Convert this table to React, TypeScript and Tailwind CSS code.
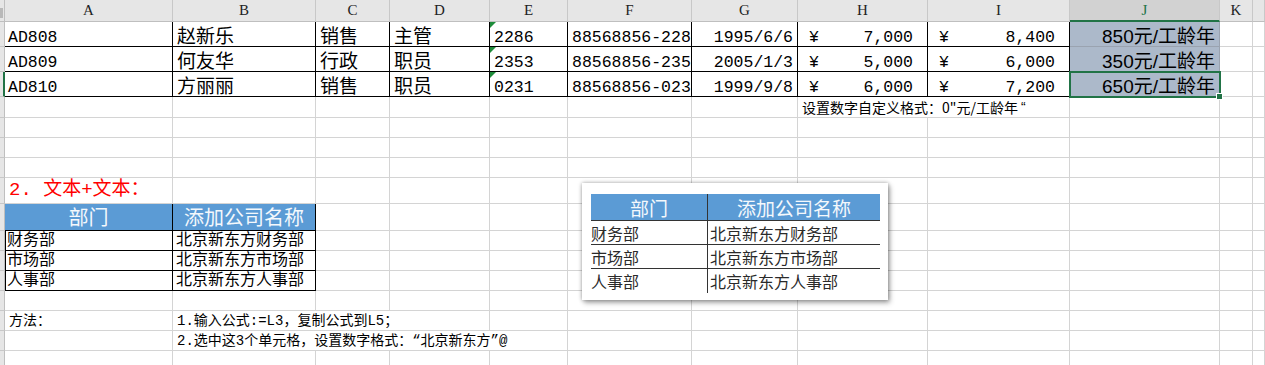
import React from "react";

// Sheet fonts: Song-style latin (monospaced serif) with a CJK fallback, and a sans stack for the J column
const SONG = "font-['Liberation_Mono','Noto_Sans_CJK_SC',monospace]";
const HEI = "font-['Liberation_Sans','Noto_Sans_CJK_SC',sans-serif]";
const CJK = "font-['Noto_Sans_CJK_SC','Liberation_Sans',sans-serif]";
const LATIN = `${SONG} text-[16.5px]`;

const SPAN: Record<number, string> = {
  1: "",
  2: "col-span-2",
  3: "col-span-3",
  4: "col-span-4",
};

type Line = "grid" | "black" | "sel" | "blue";

const LINES: Record<Line, string> = {
  grid: "border-r border-b border-[#d4d4d4]",
  black: "border-r border-b border-black",
  sel: "border-r border-b border-[#9aa3b0] bg-[#acb9ca]",
  blue: "border-r border-b border-black bg-[#5b9bd5]",
};

function Cell({
  line = "grid",
  span = 1,
  bottom = false,
  className = "",
  children,
}: {
  line?: Line;
  span?: number;
  bottom?: boolean;
  className?: string;
  children?: React.ReactNode;
}) {
  return (
    <div
      className={`relative flex whitespace-nowrap leading-none text-black ${
        bottom ? "items-end" : "items-center"
      } ${LINES[line]} ${SPAN[span]} ${className}`}
    >
      {children}
    </div>
  );
}

function RowHead({ active = false }: { active?: boolean }) {
  return (
    <div
      className={`bg-[#e6e6e6] border-b border-b-[#c8c8c8] ${
        active ? "border-r-2 border-r-[#217346]" : "border-r border-r-[#bfbfbf]"
      }`}
    />
  );
}

function ColHead({ label, active = false }: { label: string; active?: boolean }) {
  return (
    <div
      className={`flex items-center justify-center font-['Liberation_Serif',serif] text-[15px] leading-none border-r border-r-[#c8c8c8] ${
        active
          ? "bg-[#d2d2d2] text-[#217346] border-b-2 border-b-[#217346]"
          : "bg-[#e6e6e6] text-[#222] border-b border-b-[#bfbfbf]"
      }`}
    >
      {label}
    </div>
  );
}

// "number stored as text" marker in the top-left corner of a cell
function TextFlag() {
  return (
    <span className="absolute left-0 top-0 h-0 w-0 border-t-[6px] border-r-[6px] border-t-[#1e8c3a] border-r-transparent" />
  );
}

function Blank({ n }: { n: number }) {
  return (
    <>
      {Array.from({ length: n }).map((_, i) => (
        <Cell key={i} />
      ))}
    </>
  );
}

const staff = [
  ["AD808", "赵新乐", "销售", "主管", "2286", "88568856-228", "1995/6/6", "7,000", "8,400", "850"],
  ["AD809", "何友华", "行政", "职员", "2353", "88568856-235", "2005/1/3", "5,000", "6,000", "350"],
  ["AD810", "方丽丽", "销售", "职员", "0231", "88568856-023", "1999/9/8", "6,000", "7,200", "650"],
];

const depts = [
  ["财务部", "北京新东方财务部"],
  ["市场部", "北京新东方市场部"],
  ["人事部", "北京新东方人事部"],
];

const letters = ["A", "B", "C", "D", "E", "F", "G", "H", "I", "J", "K", ""];

function EmptyRow() {
  return (
    <>
      <RowHead />
      <Blank n={12} />
    </>
  );
}

function DeptCard() {
  return (
    <div className="absolute left-[582px] top-[183px] h-[117px] w-[306px] bg-white pl-[9px] pt-[11px] shadow-[0_0_4px_rgba(0,0,0,0.35),2px_3px_5px_rgba(0,0,0,0.3)]">
      <div className={`grid w-[289px] grid-cols-[117px_172px] grid-rows-[27px_24px_24px_24px] ${CJK} leading-none`}>
        <div className="flex items-center justify-center border-r border-b border-[#333] bg-[#5b9bd5] text-[19px] text-[#f4f8fc]">
          部门
        </div>
        <div className="flex items-center justify-center border-b border-[#333] bg-[#5b9bd5] text-[19px] text-[#f4f8fc]">
          添加公司名称
        </div>
        {depts.map(([d, full], i) => (
          <React.Fragment key={d}>
            <div
              className={`flex items-center border-r border-[#333] text-[16px] text-[#2a2a2a] ${
                i < 2 ? "border-b" : ""
              }`}
            >
              {d}
            </div>
            <div
              className={`flex items-center pl-[2px] border-[#333] text-[16px] text-[#2a2a2a] ${
                i < 2 ? "border-b" : ""
              }`}
            >
              {full}
            </div>
          </React.Fragment>
        ))}
      </div>
    </div>
  );
}

export default function App() {
  return (
    <div className="relative h-[365px] w-[1265px] overflow-hidden bg-white">
      <div className="grid grid-cols-[5px_168px_143px_74px_100px_78px_124px_106px_130px_142px_150px_33px_1fr] grid-rows-[22px_25px_25px_25px_21px_20px_20px_20px_26px_27px_20px_20px_20px_20px_20px_20px_20px]">
        {/* column header row */}
        <div className="relative bg-[#e6e6e6] border-r border-b border-[#bfbfbf]">
          <span className="absolute left-0 top-[8px] h-[10px] w-[3px] bg-[#b9b9b9]" />
        </div>
        {letters.map((l, i) => (
          <ColHead key={i} label={l} active={l === "J"} />
        ))}

        {/* staff rows */}
        {staff.map((p, i) => (
          <React.Fragment key={p[0]}>
            <RowHead active={i === 2} />
            <Cell line="black" bottom className={`pl-[3px] ${LATIN}`}>
              {p[0]}
            </Cell>
            <Cell line="black" className={`pl-[4px] ${CJK} text-[19px]`}>
              {p[1]}
            </Cell>
            <Cell line="black" className={`pl-[4px] ${CJK} text-[19px]`}>
              {p[2]}
            </Cell>
            <Cell line="black" className={`pl-[4px] ${CJK} text-[19px]`}>
              {p[3]}
            </Cell>
            <Cell line="black" bottom className={`pl-[4px] ${LATIN}`}>
              <TextFlag />
              {p[4]}
            </Cell>
            <Cell line="black" bottom className={`pl-[4px] ${LATIN}`}>
              {p[5]}
            </Cell>
            <Cell line="black" bottom className={`justify-end pr-[4px] ${LATIN}`}>
              {p[6]}
            </Cell>
            <Cell line="black" bottom className={`justify-between pl-[11px] pr-[14px] ${LATIN}`}>
              <span>¥</span>
              <span>{p[7]}</span>
            </Cell>
            <Cell line="black" bottom className={`justify-between pl-[11px] pr-[14px] ${LATIN}`}>
              <span>¥</span>
              <span>{p[8]}</span>
            </Cell>
            <Cell line="sel" bottom className={`justify-end pr-[4px] ${HEI} text-[19px]`}>
              {p[9]}元/工龄年
            </Cell>
            <Blank n={2} />
          </React.Fragment>
        ))}

        {/* note under the staff table */}
        <RowHead />
        <Blank n={7} />
        <Cell span={2} className={`pl-[4px] ${CJK} text-[14px]`}>
          设置数字自定义格式：0"元/工龄年
          <span className="pl-[3px] font-['Liberation_Sans',sans-serif]">“</span>
        </Cell>
        <Blank n={3} />

        <EmptyRow />
        <EmptyRow />
        <EmptyRow />

        {/* section title */}
        <RowHead />
        <Cell className={`pl-[4px] ${SONG} text-[19px]`}>
          <span className="text-[#ff0000]">2. 文本+文本：</span>
        </Cell>
        <Blank n={11} />

        {/* department table */}
        <RowHead />
        <Cell line="blue" className={`justify-center ${CJK} text-[20px]`}>
          <span className="text-[#f4f8fc]">部门</span>
        </Cell>
        <Cell line="blue" className={`justify-center ${CJK} text-[20px]`}>
          <span className="text-[#f4f8fc]">添加公司名称</span>
        </Cell>
        <Blank n={10} />

        {depts.map(([d, full]) => (
          <React.Fragment key={d}>
            <RowHead />
            <Cell line="black" className={`border-l pl-[1px] ${SONG} text-[16px]`}>
              {d}
            </Cell>
            <Cell line="black" className={`pl-[3px] ${SONG} text-[16px]`}>
              {full}
            </Cell>
            <Blank n={10} />
          </React.Fragment>
        ))}

        <EmptyRow />

        {/* method notes */}
        <RowHead />
        <Cell className={`pl-[4px] ${SONG} text-[14px]`}>方法：</Cell>
        <Cell span={3} className={`pl-[4px] ${SONG} text-[14px]`}>
          1.输入公式:=L3，复制公式到L5；
        </Cell>
        <Blank n={8} />

        <RowHead />
        <Cell />
        <Cell span={4} className={`pl-[4px] ${SONG} text-[14px]`}>
          2.选中这3个单元格，设置数字格式：“北京新东方”@
        </Cell>
        <Blank n={7} />

        <EmptyRow />
      </div>

      {/* active cell frame and fill handle */}
      <div className="absolute left-[1069px] top-[71px] h-[27px] w-[152px] border-2 border-[#217346]" />
      <div className="absolute left-[1216px] top-[93px] h-[7px] w-[7px] border border-white bg-[#217346]" />

      <DeptCard />
    </div>
  );
}
